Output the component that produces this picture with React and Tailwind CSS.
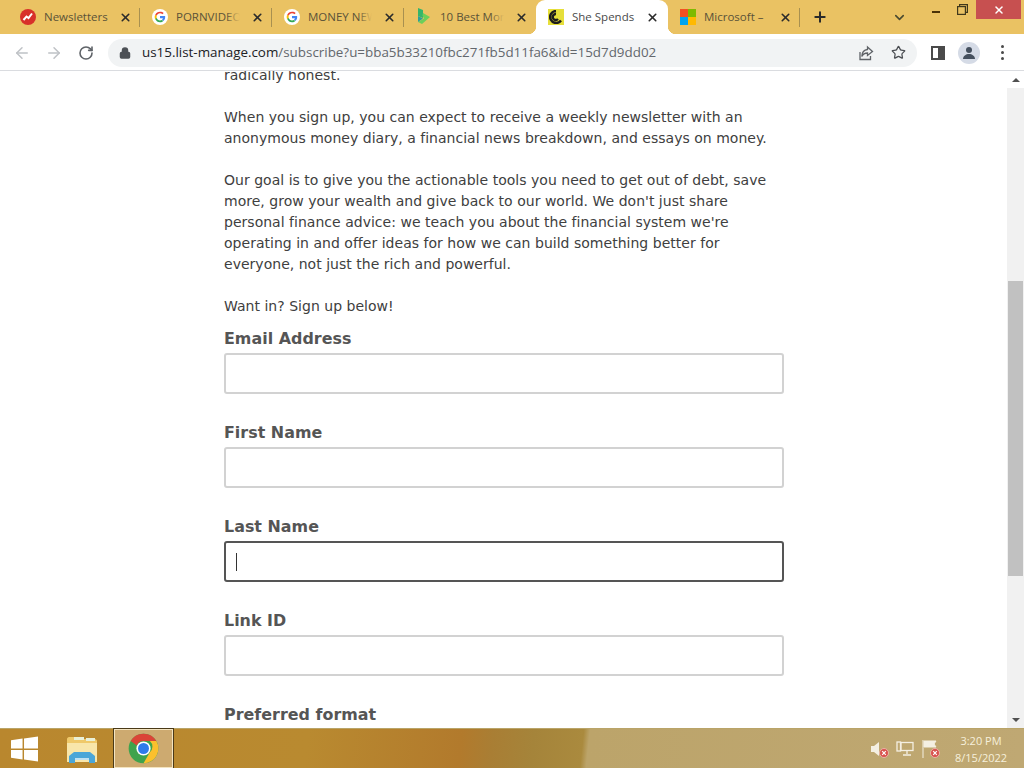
import React from "react";
import { ArrowLeft, ArrowRight, RotateCw, Lock, Star, Plus, ChevronDown, X } from "lucide-react";

const GoogleG = () => (
  <svg width="16" height="16" viewBox="0 0 48 48" className="shrink-0">
    <circle cx="24" cy="24" r="24" fill="#fff" />
    <path fill="#EA4335" d="M24 13c3 0 5.300 1 7.200 2.800l3.900-3.900C32.600 9.500 28.800 8 24 8c-6.300 0-11.800 3.600-14.300 8.900l4.600 3.600C15.500 16.200 19.400 13 24 13z" />
    <path fill="#4285F4" d="M39.500 24.400c0-1.200-.1-2.300-.3-3.400H24v6.400h8.700c-.4 2-1.500 3.700-3.200 4.900l4.500 3.500c2.900-2.600 5.500-6.500 5.500-11.400z" />
    <path fill="#FBBC05" d="M14.300 27.500c-.3-1-.5-2.300-.5-3.500s.2-2.400.5-3.500l-4.600-3.600C8.600 19 8 21.400 8 24s.6 5 1.700 7.100l4.600-3.600z" />
    <path fill="#34A853" d="M24 40c4.300 0 7.900-1.400 10-3.700l-4.500-3.500c-1.300.9-3 1.400-5.500 1.400-4.600 0-8.500-3.200-9.700-7.500l-4.600 3.600C12.200 36.400 17.700 40 24 40z" />
  </svg>
);

const TabClose = () => <X size={13} strokeWidth={3} className="text-[#2b2b2b] shrink-0" />;

const Tab = ({ icon, title, sep = true, fade = false }) => (
  <div className="w-[132px] h-[34px] flex items-center pl-3 pr-2 relative shrink-0">
    <div className="w-4 h-4 shrink-0 flex items-center justify-center">{icon}</div>
    <div className="ml-2 relative overflow-hidden whitespace-nowrap text-[11.5px] text-[#5a5238] w-[64px] shrink-0">
      {title}
      {fade && <div className="absolute right-0 top-0 bottom-0 w-[14px] bg-gradient-to-r from-transparent to-[#eac263]" />}
    </div>
    <div className="flex-1" />
    <TabClose />
    {sep && <div className="absolute right-0 top-[8px] w-px h-[19px] bg-[#a89050]" />}
  </div>
);

const Field = ({ label, focused }) => (
  <div className="mb-[26px]">
    <div className="font-bold text-[15.9px] leading-[25px] text-[#555555] mb-[2px]">{label}</div>
    <div className={focused
      ? "h-[41px] w-[560px] border-2 border-[#555555] rounded-[3px] bg-white flex items-center pl-[10px]"
      : "h-[41px] w-[560px] border-2 border-[#d2d2d2] rounded-[3px] bg-white"}>
      {focused && <div className="w-px h-[18px] bg-[#333333]" />}
    </div>
  </div>
);

const Chrome = () => (
  <svg width="31" height="31" viewBox="0 0 48 48">
    <circle cx="24" cy="24" r="23" fill="#3FA34D" />
    <path fill="#DB4437" d="M24 1a23 23 0 0 1 19.900 11.500H24a11.500 11.500 0 0 0-10.400 6.700L4.100 12.500A23 23 0 0 1 24 1z" />
    <path fill="#FBC02D" d="M43.900 12.500A23 23 0 0 1 24 47l9.900-17.200a11.500 11.500 0 0 0 0-17.300z" />
    <circle cx="24" cy="24" r="11" fill="#fff" />
    <circle cx="24" cy="24" r="8.500" fill="#2F7BEA" />
  </svg>
);

const Tray = ({ children }) => (
  <div className="relative w-[18px] h-[18px] flex items-center">
    {children}
    <svg width="10" height="10" viewBox="0 0 10 10" className="absolute right-0 bottom-0">
      <circle cx="5" cy="5" r="4.500" fill="#d9534f" stroke="#f0c0b8" strokeWidth=".8" />
      <path d="M3.200 3.200l3.600 3.600M6.800 3.200l-3.600 3.600" stroke="#fff" strokeWidth="1.200" />
    </svg>
  </div>
);

export default function App() {
  return (
    <div className="w-[1024px] h-[768px] overflow-hidden flex flex-col bg-white font-['Open_Sans','Liberation_Sans',sans-serif]">
      {/* Tab strip */}
      <div className="h-[34px] bg-[#eac263] flex items-start shrink-0">
        <div className="w-2 shrink-0" />
        <Tab title="Newsletters" icon={
          <svg width="16" height="16" viewBox="0 0 16 16"><circle cx="8" cy="8" r="8" fill="#d8302a" /><path d="M3.500 11 L6.500 7.500 L8.500 9 L12 4.500" stroke="#fff" strokeWidth="2" fill="none" /></svg>
        } />
        <Tab title="PORNVIDEOS" fade icon={<GoogleG />} />
        <Tab title="MONEY NEWS" fade icon={<GoogleG />} />
        <Tab title="10 Best Money" fade sep={false} icon={
          <svg width="14" height="18" viewBox="0 0 14 18"><path d="M1 0 L6 2 V10 L1 8z" fill="#35b56a" /><path d="M6 5 L13 9 L5 16 L1 14 L7 10.500 L5.500 7.500z" fill="#6ccf5a" /><path d="M1 8 L6 10.500 L1 14z" fill="#2c9f9a" /></svg>
        } />
        <div className="relative w-[132px] h-[34px] bg-white rounded-t-[9px] flex items-center pl-[12px] pr-[9px] shrink-0">
          <div className="absolute -left-[8px] bottom-0 w-2 h-2 bg-[radial-gradient(circle_at_0_0,transparent_8px,#ffffff_8.500px)]" />
          <div className="absolute -right-[8px] bottom-0 w-2 h-2 bg-[radial-gradient(circle_at_100%_0,transparent_8px,#ffffff_8.500px)]" />
          <div className="w-4 h-4 bg-[#e6df3a] shrink-0 flex items-center justify-center">
            <svg width="14" height="14" viewBox="0 0 14 14"><path d="M7 1a6 6 0 1 0 5 9.500 M7 4a3 3 0 1 0 2 5" stroke="#1c1c1c" strokeWidth="2.400" fill="none" /></svg>
          </div>
          <div className="ml-2 text-[11.5px] text-[#4a4a4a] whitespace-nowrap">She Spends</div>
          <div className="flex-1" />
          <TabClose />
        </div>
        <Tab title="Microsoft –" icon={
          <div className="grid grid-cols-2 gap-0 w-4 h-4">
            <div className="bg-[#f25022]" /><div className="bg-[#7fba00]" /><div className="bg-[#00a4ef]" /><div className="bg-[#ffb900]" />
          </div>
        } />
        <div className="ml-[12px] mt-[9px] text-[#2a2a2a]"><Plus size={16} strokeWidth={3} /></div>
        <div className="ml-[64px] mt-[10px] text-[#4a4a30]"><ChevronDown size={15} strokeWidth={2.5} /></div>
        <div className="flex-1" />
        <div className="w-[8px] h-[2px] mt-[11px] bg-[#4a3208]" />
        <div className="w-[11px] mt-[4px] ml-[17px] flex items-center justify-center">
          <svg width="11" height="11" viewBox="0 0 11 11" fill="none" stroke="#40381c" strokeWidth="1.200"><rect x=".6" y="2.600" width="7.800" height="7.800" /><path d="M2.600 2.600V.6h7.800v7.800H8.400" /></svg>
        </div>
        <div className="w-[45px] h-[19px] bg-[#c75050] ml-[8px] mr-[3px] flex items-center justify-center"><X size={12} strokeWidth={3} className="text-white" /></div>
      </div>

      {/* Toolbar */}
      <div className="h-[37px] shrink-0 bg-white border-b border-[#dadce0] flex items-center pt-px">
        <div className="w-[44px] flex justify-center"><ArrowLeft size={18} strokeWidth={2} className="text-[#bfc2c6]" /></div>
        <div className="w-[20px] flex justify-center"><ArrowRight size={18} strokeWidth={2} className="text-[#bfc2c6]" /></div>
        <div className="w-[44px] flex justify-center"><RotateCw size={16} strokeWidth={2.4} className="text-[#5f6368]" /></div>
        <div className="w-[809px] h-[28px] rounded-full bg-[#f1f3f4] flex items-center">
          <Lock size={12} strokeWidth={3} className="ml-[11px] text-[#4d5156] fill-[#4d5156]" />
          <div className="ml-[11px] text-[13.4px] whitespace-nowrap">
            <span className="text-[#202124]">us15.list-manage.com</span><span className="text-[#63676c]">/subscribe?u=bba5b33210fbc271fb5d11fa6&id=15d7d9dd02</span>
          </div>
          <div className="flex-1" />
          <svg width="16" height="16" viewBox="0 0 16 16" fill="none" stroke="#5f6368" strokeWidth="1.300" className="mr-[17px]">
            <path d="M2 7v7.500h10.500V11" /><path d="M9.500 2 L14.500 6.500 L9.500 10.500V8C7 8 5 9 3.800 11.500 4 7.500 6 4.800 9.500 4.500z" />
          </svg>
          <Star size={15} strokeWidth={2} className="text-[#4a4d52] mr-[11px]" />
        </div>
        <div className="ml-[14px] w-[14px] h-[14px] border-2 border-[#4a4a4a] flex justify-end"><div className="w-[5px] h-full bg-[#4a4a4a]" /></div>
        <div className="ml-[13px] w-[22px] h-[22px] rounded-full bg-[#d5dbe6] flex items-center justify-center">
          <svg width="14" height="14" viewBox="0 0 14 14" fill="#45505e"><circle cx="7" cy="4" r="3" /><path d="M1 13c0-3 3-5 6-5s6 2 6 5z" /></svg>
        </div>
        <div className="ml-[21px] flex flex-col gap-[3px]">
          <div className="w-[3px] h-[3px] rounded-full bg-[#4a4a4a]" />
          <div className="w-[3px] h-[3px] rounded-full bg-[#4a4a4a]" />
          <div className="w-[3px] h-[3px] rounded-full bg-[#4a4a4a]" />
        </div>
      </div>

      {/* Viewport */}
      <div className="flex-1 min-h-0 flex">
        <div className="flex-1 overflow-hidden pl-[224px] font-['DejaVu_Sans','Verdana',sans-serif] text-[14px] leading-[21px] tracking-[0.02px] text-[#404040]">
          <div className="w-[560px] -mt-[6px]">
            <p>radically honest.</p>
            <p className="mt-[21px]">When you sign up, you can expect to receive a weekly newsletter with an<br />anonymous money diary, a financial news breakdown, and essays on money.</p>
            <p className="mt-[21px]">Our goal is to give you the actionable tools you need to get out of debt, save<br />more, grow your wealth and give back to our world. We don't just share<br />personal finance advice: we teach you about the financial system we're<br />operating in and offer ideas for how we can build something better for<br />everyone, not just the rich and powerful.</p>
            <p className="mt-[21px] mb-[9px]">Want in? Sign up below!</p>
            <Field label="Email Address" />
            <Field label="First Name" />
            <Field label="Last Name" focused />
            <Field label="Link ID" />
            <div className="font-bold text-[15.9px] leading-[25px] text-[#555555]">Preferred format</div>
          </div>
        </div>
        {/* Scrollbar */}
        <div className="w-[17px] bg-[#f1f1f1] flex flex-col items-center shrink-0">
          <div className="h-[17px] w-full bg-white flex items-center justify-center">
            <div className="w-0 h-0 border-x-[4px] border-x-transparent border-b-[4px] border-b-[#505050]" />
          </div>
          <div className="h-[193px]" />
          <div className="h-[295px] w-[15px] bg-[#c1c1c1]" />
          <div className="flex-1" />
          <div className="h-[17px] w-full flex items-center justify-center">
            <div className="w-0 h-0 border-x-[4px] border-x-transparent border-t-[4px] border-t-[#505050]" />
          </div>
        </div>
      </div>

      {/* Taskbar */}
      <div className="h-[40px] shrink-0 flex items-center bg-[linear-gradient(96deg,#b9872e_0%,#b98a30_30%,#b27a2c_45%,#a97e34_48%,#a5843a_52%,#aa8a3e_56.800%,#bca46a_57.400%,#bfa873_100%)] border-t border-[#b9a468]">
        <div className="w-[49px] flex justify-center">
          <svg width="27" height="26" viewBox="0 0 28 26" fill="#fff"><path d="M0 4 L12 2.200V12.500H0z" /><path d="M13.500 2 L28 0V12.500H13.500z" /><path d="M0 14H12V24L0 22.200z" /><path d="M13.500 14H28V26L13.500 24z" /></svg>
        </div>
        <div className="w-[65px] flex justify-center">
          <svg width="32" height="30" viewBox="0 0 32 30">
            <path d="M1 5c0-1 1-2 2-2h8l2 2h16c1 0 2 1 2 2v20H1z" fill="#efc96a" />
            <path d="M8 3h10v3H8zM20 4h9v3h-9z" fill="#e9f0d8" />
            <rect x="1" y="9" width="30" height="19" fill="#f8e6aa" />
            <path d="M3 29v-7l5-4h16l5 4v7h-6v-5H9v5z" fill="#4aa6d8" />
            <path d="M9 24h14v2H9z" fill="#bfe0f0" />
          </svg>
        </div>
        <div className="w-[59px] h-[39px] bg-[#cdaa70] border border-[#f4e4c0] outline outline-[#4a3a18] flex items-center justify-center"><Chrome /></div>
        <div className="flex-1" />
        <div className="flex items-center mr-[15px]">
          <Tray><svg width="12" height="16" viewBox="0 0 12 16" fill="#f4efe2"><path d="M0 5h3l5-4v14l-5-4H0z" /></svg></Tray>
          <svg width="18" height="16" viewBox="0 0 18 16" fill="none" stroke="#f4efe2" strokeWidth="1.300" className="ml-[7px]"><rect x="5" y="1.500" width="12" height="8" /><rect x="1" y="1" width="3.500" height="9" /><path d="M11 10v3M7 14h8" /></svg>
          <div className="ml-[8px]"><Tray><svg width="16" height="18" viewBox="0 0 16 18" fill="#f4efe2"><path d="M1 0v18M2 1h12l-2 3 2 3H2z" stroke="#f4efe2" /></svg></Tray></div>
        </div>
        <div className="w-[52px] mr-[17px] text-[11px] leading-[17px] text-[#f6f0dc] text-center whitespace-nowrap">
          <div>3:20 PM</div>
          <div>8/15/2022</div>
        </div>
      </div>
    </div>
  );
}
